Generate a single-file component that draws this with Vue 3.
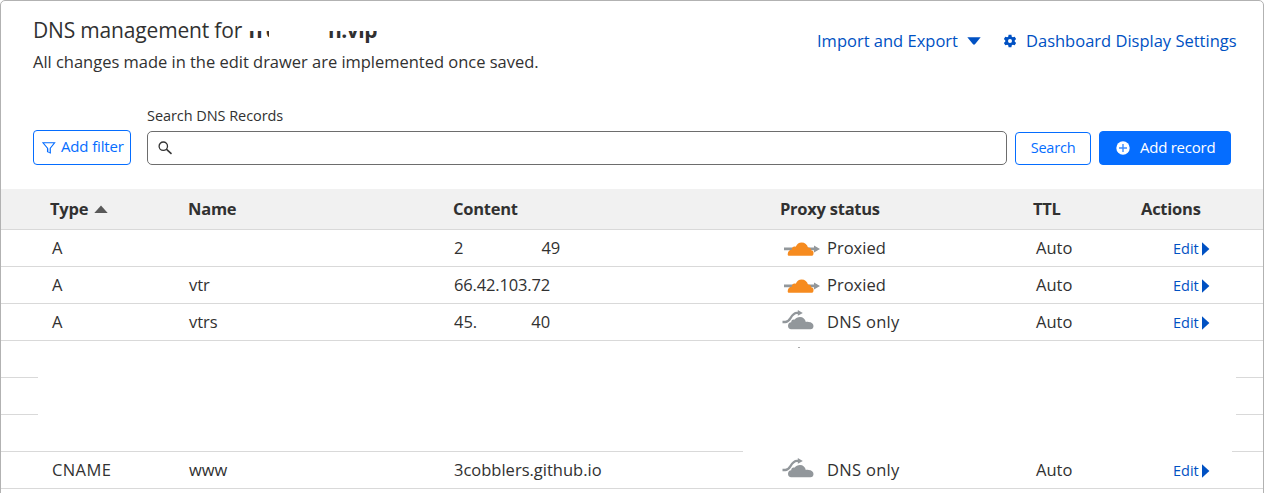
<script setup>
const records = [
  { type: 'A', name: '', content: ['2', '49'], variant: 'first', proxied: true },
  { type: 'A', name: 'vtr', content: ['66.42.103.72'], variant: 'second', proxied: true },
  { type: 'A', name: 'vtrs', content: ['45.', '40'], variant: 'third', proxied: false },
  { blank: true },
  { blank: true },
  { blank: true, last: true },
  { type: 'CNAME', name: 'www', content: ['3cobblers.github.io'], wide: true, proxied: false },
]
</script>

<template>
  <main class="card">
    <header class="top">
      <div class="titles">
        <h1><span class="title">DNS management for</span><b class="host-a">fre</b><b class="host-b">n.vip</b></h1>
        <p>All changes made in the edit drawer are implemented once saved.</p>
      </div>
      <nav class="links">
        <a class="import">Import and Export</a>
        <svg class="caret" width="14" height="8" viewBox="0 0 14 8"><path d="M0.3 0.3h13.4L8 7.2q-1 .9-2 0z" fill="#0051c3" /></svg>
        <svg class="gear" width="14" height="14" viewBox="0 0 14 14"><path fill="#0051c3" fill-rule="evenodd" d="M5.600 .8h2.800l.4 1.900 1.100.6 1.800-.6 1.400 2.400-1.400 1.300v1.200l1.400 1.300-1.400 2.400-1.800-.6-1.100.6-.4 1.900H5.600l-.4-1.900-1.100-.6-1.800.6L.9 8.900l1.400-1.300V6.400L.9 5.100l1.400-2.400 1.800.6 1.100-.6zM7 5a2 2 0 1 0 0 4a2 2 0 0 0 0-4z" /></svg>
        <a class="settings">Dashboard Display Settings</a>
      </nav>
    </header>

    <section class="tools">
      <button class="filter">
        <svg width="14" height="13" viewBox="0 0 14 13" fill="none" stroke="#056dff" stroke-width="1.1"><path d="M1 1.800h11.600L8.300 7.200v4.800l-2.800-1.300V7.200z" /><path d="M6.900 7.500v4" stroke="#8ab9ff" /></svg>
        <span>Add filter</span>
      </button>
      <div class="search">
        <label>Search DNS Records</label>
        <div class="input">
          <svg width="16" height="15" viewBox="0 0 16 15" fill="none" stroke="#333"><circle cx="5.300" cy="5.200" r="4.200" stroke-width="1.300" /><path d="M8.300 8.100l5.200 4.800" stroke-width="1.500" /></svg>
        </div>
      </div>
      <button class="find"><span>Search</span></button>
      <button class="add">
        <svg width="14" height="14" viewBox="0 0 14 14"><circle cx="7" cy="7" r="6.700" fill="#fff" /><path d="M7 3v8M3 7h8" stroke="#3b8cff" stroke-width="1.400" /></svg>
        <span>Add record</span>
      </button>
    </section>

    <section class="table">
      <div class="row head">
        <span class="h-type">Type<svg width="14" height="8" viewBox="0 0 14 8"><path d="M7 .6L13.700 8H.3z" fill="#595959" /></svg></span>
        <span class="h-name">Name</span>
        <span class="h-content">Content</span>
        <span class="h-proxy">Proxy status</span>
        <span class="h-ttl">TTL</span>
        <span class="h-actions">Actions</span>
      </div>
      <template v-for="(r, i) in records" :key="i">
        <div v-if="r.blank" class="row blank" :class="{ last: r.last }">
          <i class="left"></i><i v-if="i === 3" class="speck"></i><i class="right"></i>
        </div>
        <div v-else class="row">
          <span class="type" :class="{ cname: r.wide }">{{ r.type }}</span>
          <span class="name">{{ r.name }}</span>
          <span class="content" :class="r.variant"><span v-for="c in r.content" :key="c">{{ c }}</span></span>
          <span class="proxy">
            <svg v-if="r.proxied" width="38" height="22" viewBox="0 0 38 22">
              <path d="M1 10.600h30V8.600l6 3.400-6 3.400v-2.200H1z" fill="#92979b" />
              <path transform="translate(0 .7)" d="M4.700 16.500c0-2.600 1.700-4.300 4.100-4.400-.3-2.300 1.700-3.900 4-3.100C13.800 6.200 16 4.700 18.600 4.700c3.300 0 5.700 2 6.400 5.100 1.900-.1 3 1 3.200 2.700 2.100.2 2.700 2.100 2.200 4-.3 1-1 1.500-1.900 1.500H6.300c-1.100 0-1.600-.5-1.600-1.500z" fill="#f68b1f" />
            </svg>
            <svg v-else width="38" height="22" viewBox="0 0 38 22">
              <path d="M-.5 11h2.800c2.500 0 3.400-1 5.200-3.900C9.400 3.900 11 1.900 14 1.900h2" fill="none" stroke="#92979b" stroke-width="2.300" />
              <path d="M14.800-1l5 2.900-5 2.900z" fill="#92979b" />
              <path d="M5 14.700c0-2 1.300-3.300 3.200-3.500-.1-2.100 1.600-3.300 3.600-2.600C12.700 6.900 14.700 5.900 17 5.900c3 0 5.300 2 5.800 5 .8-.2 2-.2 2.800 0 2.900.1 4.900 1.700 4.900 4 0 2-1.200 3.300-3 3.300H8.200C6.200 18.200 5 16.900 5 14.700z" fill="#92979b" />
            </svg>
            <span :class="r.proxied ? 'proxied' : 'dns'">{{ r.proxied ? 'Proxied' : 'DNS only' }}</span>
          </span>
          <span class="ttl">Auto</span>
          <span class="edit"><span>Edit</span><svg width="8" height="14" viewBox="0 0 8 14"><path d="M0 0.300L7.400 7 0 13.700z" fill="#0051c3" /></svg></span>
        </div>
      </template>
    </section>
  </main>
</template>

<style>
html, body { background: #fff; overflow: hidden; }
</style>

<style scoped>
* { box-sizing: border-box; }
.card {
  width: 1264px; height: 510px; border: 1px solid #b2b2b2; border-radius: 5px;
  font: 16.5px/24px "Open Sans", "Noto Sans", sans-serif; color: #313131; white-space: nowrap; overflow: hidden;
}
svg { display: block; flex: none; overflow: visible; }
.top { display: flex; justify-content: space-between; height: 100px; padding: 0 26px 0 32px; }
.titles { width: 520px; }
h1 { display: flex; margin: 14px 0 0; font-size: 21px; line-height: 30px; font-weight: 400; }
h1 b { display: block; }
.title { width: 215px; letter-spacing: -.17px; }
.host-a { width: 37px; clip-path: inset(16px 16px 0 0); }
.host-b { margin-left: 43px; clip-path: inset(16px 0 0 0); letter-spacing: -.5px; }
p { margin: 5px 0 0; letter-spacing: -.02px; }
.links { display: flex; align-items: center; height: 24px; margin-top: 28px; color: #0051c3; }
.import { width: 149px; }
.caret { margin: 0 22px 0 1px; }
.gear { margin-right: 9px; }
.settings { width: 211px; }
.tools { display: flex; align-items: flex-end; height: 64px; padding-left: 32px; }
button { font: inherit; height: 35px; border: 1px solid #056dff; border-radius: 4px; background: #fff; color: #056dff; padding: 0; display: flex; align-items: center; }
.filter { width: 98px; margin-right: 16px; padding-left: 8px; font-size: 15px; }
.filter span { margin: -3px 0 0 5px; letter-spacing: -.15px; }
.search { width: 860px; }
label { display: block; font-size: 14.5px; line-height: 20px; margin-bottom: 5px; letter-spacing: -.06px; }
.input { height: 34px; border: 1px solid #6d6d6d; border-radius: 5px; padding: 9px 0 0 10px; }
.find { width: 76px; height: 33px; margin-left: 8px; justify-content: center; font-size: 14.5px; letter-spacing: -.2px; }
.find span { margin-top: -1px; }
.add { width: 132px; height: 34px; margin-left: 8px; padding-left: 16px; background: #056dff; color: #fff; font-size: 15px; letter-spacing: -.25px; }
.add span { margin: -2px 0 0 10px; }
.table { margin-top: 24px; }
.row { display: grid; grid-template-columns: 138px 265px 329px 252px 106px 1fr; align-items: center; height: 37px; padding-left: 50px; border-bottom: 1px solid #d9d9d9; }
.head { grid-template-columns: 139px 265px 327px 253px 108px 1fr; height: 41px; background: #f1f1f1; font-weight: 700; padding-left: 48px; letter-spacing: -.25px; }
.h-type { display: flex; align-items: center; gap: 6px; }
.h-type { padding-left: 1px; }
.type { padding-left: 1px; }
.cname { letter-spacing: .4px; }
.proxy { display: flex; align-items: center; gap: 6px; }
.dns { letter-spacing: .3px; }
.ttl { padding-left: 1px; }
.edit { display: flex; align-items: center; padding: 1px 0 0 32px; font-size: 14.5px; color: #0051c3; }
.edit svg { margin-left: 3px; }
.content { display: flex; }
.first { gap: 78px; }
.second { letter-spacing: -.15px; }
.third { gap: 54px; }
.blank { display: flex; justify-content: space-between; padding: 0; border: 0; align-items: flex-end; }
.left { width: 37px; border-bottom: 1px solid #d9d9d9; }
.right { width: 27px; border-bottom: 1px solid #d9d9d9; }
.speck { width: 2px; height: 1px; background: #aaa; margin: 0 auto 30px 760px; }
.last .left { width: 742px; }
.last .right { width: 31px; }
</style>
